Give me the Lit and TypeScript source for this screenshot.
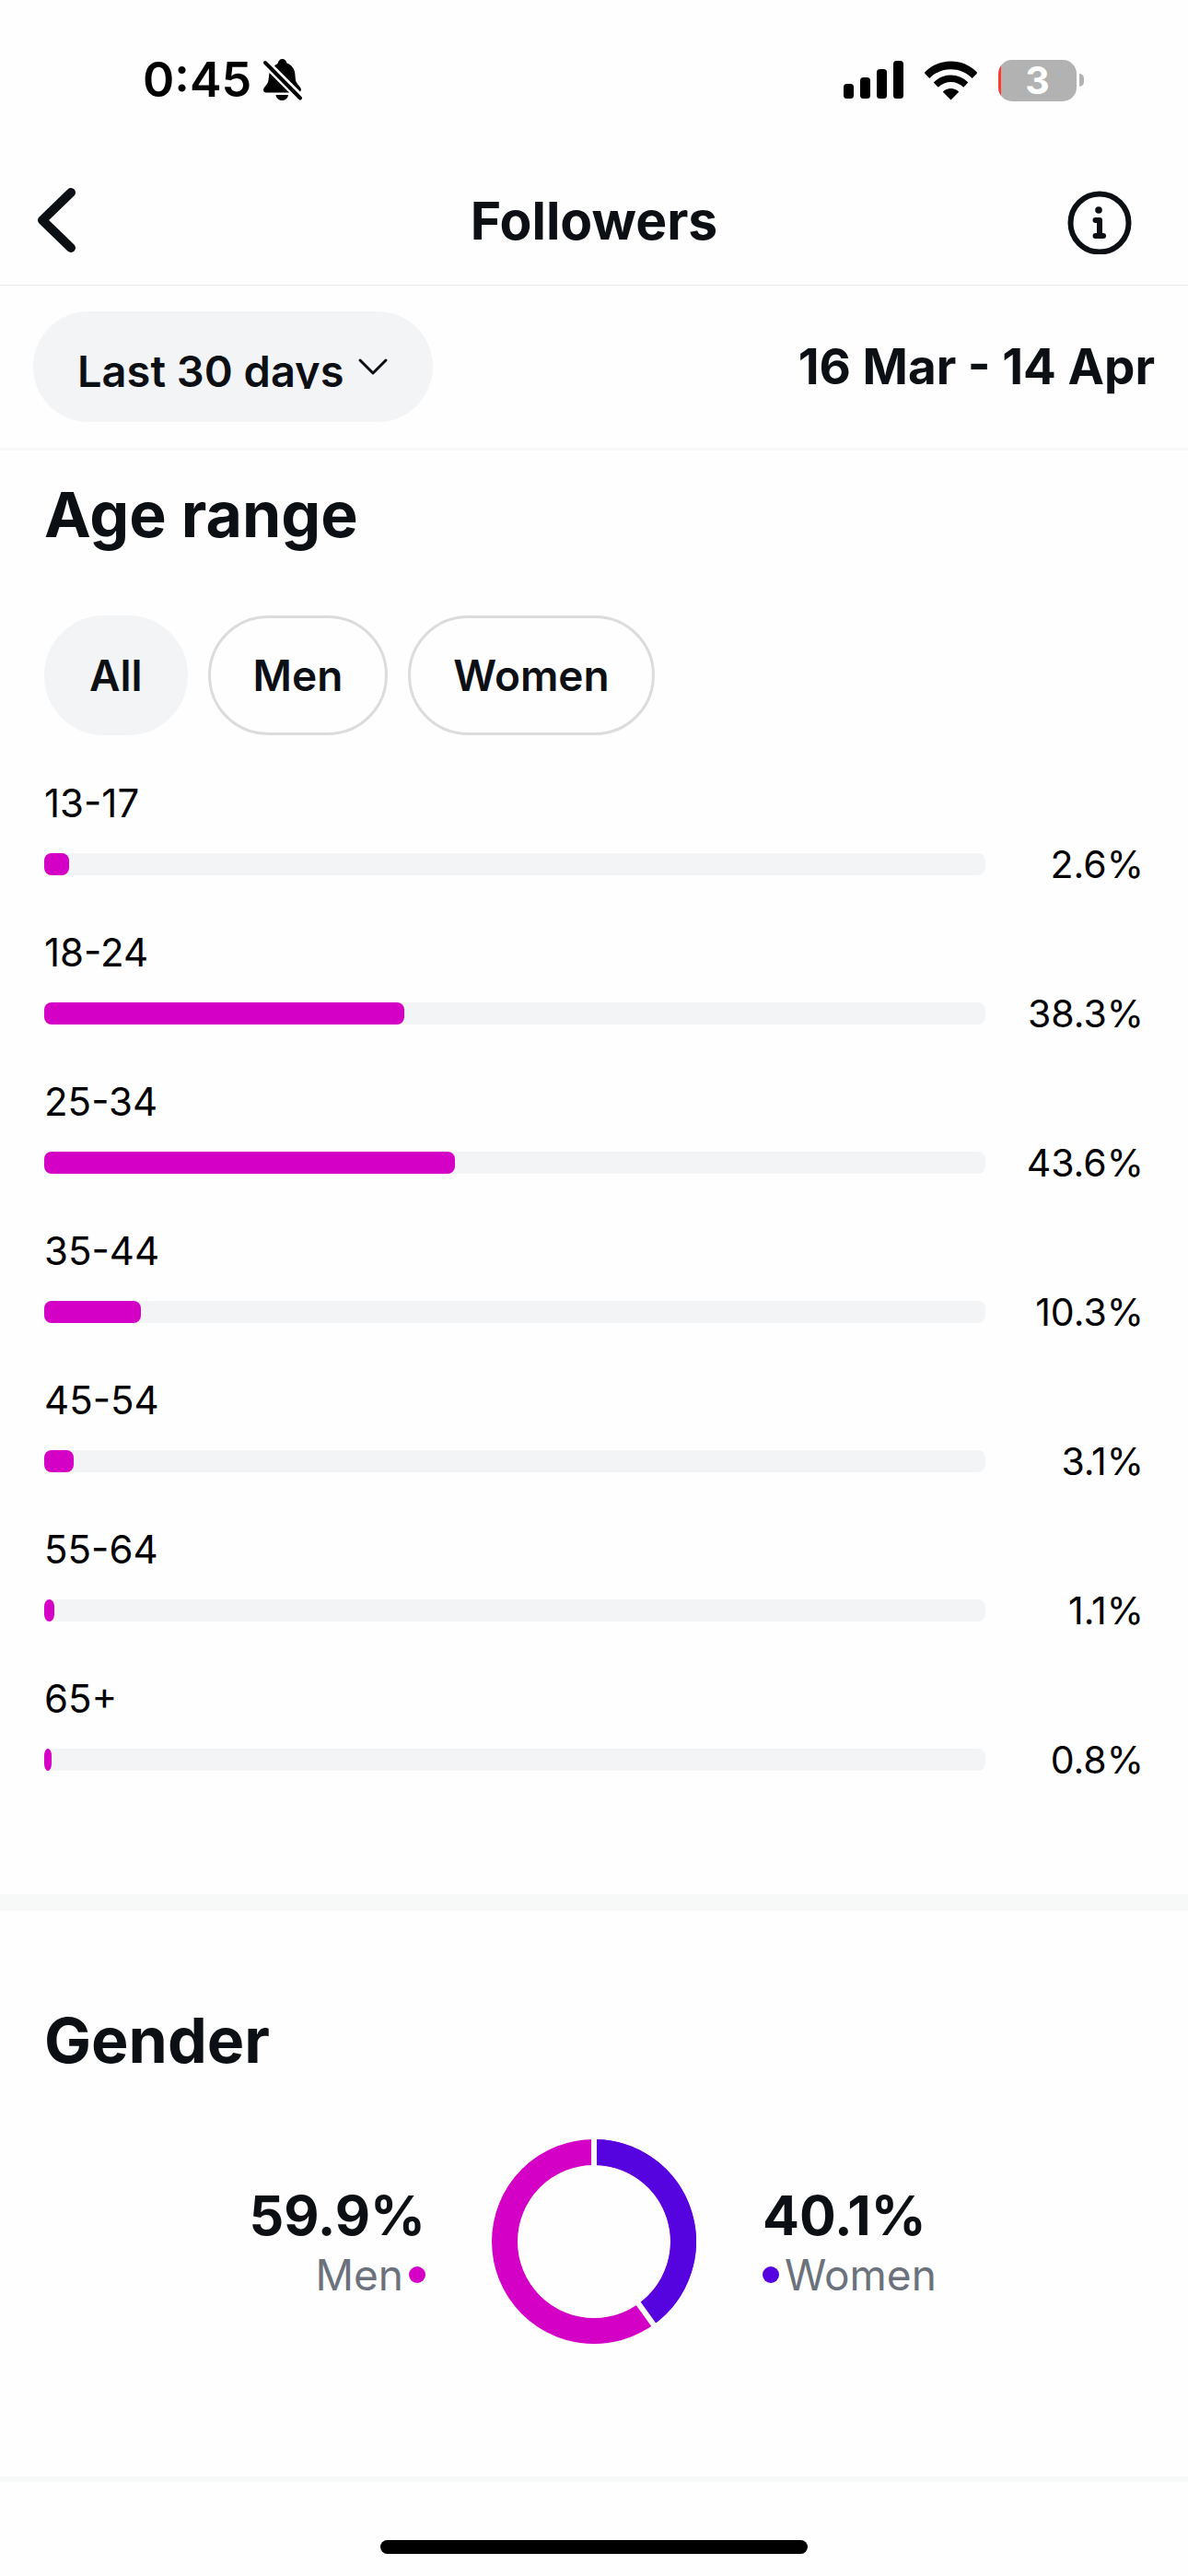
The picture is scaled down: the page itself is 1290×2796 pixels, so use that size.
import { LitElement, html, css, svg } from "lit";
import { customElement, property, state } from "lit/decorators.js";
import { classMap } from "lit/directives/class-map.js";

const FONT = css`Inter, "Liberation Sans", sans-serif`;

const AGE_ROWS = [
  { label: "13-17", value: 2.6 },
  { label: "18-24", value: 38.3 },
  { label: "25-34", value: 43.6 },
  { label: "35-44", value: 10.3 },
  { label: "45-54", value: 3.1 },
  { label: "55-64", value: 1.1 },
  { label: "65+", value: 0.8 },
];

@customElement("status-bar")
export class StatusBar extends LitElement {
  static styles = css`
    :host {
      display: flex;
      justify-content: space-between;
      align-items: center;
      height: 174px;
      padding: 0 113px 0 155px;
      box-sizing: border-box;
      color: #000;
      font-family: ${FONT};
    }
    .clock,
    .signals {
      display: flex;
      align-items: center;
    }
    .clock {
      gap: 12px;
    }
    .time {
      font-size: 52px;
      line-height: 64px;
      font-weight: 600;
    }
    .signals {
      gap: 22px;
    }
    .battery {
      display: flex;
      align-items: center;
      gap: 3px;
    }
    .cell {
      display: grid;
      place-items: center;
      width: 85px;
      height: 45px;
      border-radius: 15px;
      background: linear-gradient(90deg, #ff3b30 3px, #b2b2b2 3px);
      color: #fff;
      font-size: 41px;
      line-height: 45px;
      font-weight: 700;
    }
    .cap {
      width: 5px;
      height: 14px;
      border-radius: 0 5px 5px 0;
      background: #b2b2b2;
    }
    svg {
      display: block;
    }
  `;
  render() {
    return html`
      <div class="clock">
        <span class="time">0:45</span>
        <svg width="44" height="48" viewBox="0 0 44 48" role="img" aria-label="Silent mode">
          <path d="M13 8.500C14.500 7 15.500 6.500 16.500 6C17 3 19 1 21.500 1C24 1 26 3 26.500 5.500C32 7.500 35 12 35.300 17L36 24C36.500 28 42 31 42 34.500L41 36.500Z" />
          <path d="M7.500 16L29 37.500H4C2 37.500 1 36.500 1 34.500C1 31.500 6 29 6.500 24Z" />
          <path d="M14.500 40H28C27.500 43.500 25 46 21.300 46S15 43.500 14.500 40Z" />
          <path d="M3 5L41 43.500" fill="none" stroke="#000" stroke-width="4" stroke-linecap="round" />
        </svg>
      </div>
      <div class="signals">
        <svg width="66" height="42" viewBox="0 0 66 42" role="img" aria-label="Mobile signal">
          <rect x="0" y="25" width="11" height="16" rx="3.500" />
          <rect x="18" y="18" width="11" height="23" rx="3.500" />
          <rect x="36" y="9" width="11" height="32" rx="3.500" />
          <rect x="54" y="0" width="11" height="41" rx="3.500" />
        </svg>
        <svg width="58" height="43" viewBox="0 0 58 43" role="img" aria-label="Wi-Fi">
          <path d="M28.500 42.500L19.800 33.700C24.500 28.900 32.500 28.900 37.200 33.700Z" />
          <path d="M14.800 28.700L9.700 23.600C20 12.800 37 12.800 47.300 23.600L42.200 28.700C34.500 21 22.500 21 14.800 28.700Z" />
          <path d="M5.300 18.900L.6 14.200C-.1 13.500-.1 12.700.6 12C16-3.300 41-3.300 56.400 12C57.100 12.700 57.100 13.500 56.400 14.200L51.700 18.900C39 6 18 6 5.300 18.900Z" />
        </svg>
        <div class="battery" role="img" aria-label="Battery 3 percent">
          <span class="cell">3</span><span class="cap"></span>
        </div>
      </div>
    `;
  }
}

@customElement("age-row")
export class AgeRow extends LitElement {
  @property() label = "";
  @property({ type: Number }) value = 0;
  static styles = css`
    :host {
      display: block;
      color: #000;
      font-family: ${FONT};
      font-size: 42px;
      line-height: 54px;
    }
    .line {
      display: grid;
      grid-template-columns: 1fr 172px;
      align-items: center;
      height: 54px;
      margin-top: 12px;
    }
    .track {
      height: 24px;
      border-radius: 8px;
      background: #f3f4f6;
    }
    .fill {
      height: 24px;
      border-radius: min(8px, 50%) / 8px;
      background: #d400c5;
    }
    .value {
      font-size: 41px;
      text-align: right;
    }
  `;
  render() {
    return html`
      <div class="label">${this.label}</div>
      <div class="line">
        <div class="track"><div class="fill" style="width:${this.value}%"></div></div>
        <span class="value">${this.value}%</span>
      </div>
    `;
  }
}

@customElement("gender-ring")
export class GenderRing extends LitElement {
  @property({ type: Number }) women = 0;
  static styles = css`
    :host,
    svg {
      display: block;
    }
  `;
  render() {
    const angle = (this.women / 100) * 2 * Math.PI;
    const at = (a: number, r: number) => `${111 + r * Math.sin(a)} ${111 - r * Math.cos(a)}`;
    const cut = (a: number) =>
      svg`<path d="M${at(a, 78)}L${at(a, 116)}" stroke="#fefefe" stroke-width="6" />`;
    return html`
      <svg width="222" height="222" viewBox="0 0 222 222" role="img" aria-label="Gender split">
        <circle cx="111" cy="111" r="97" fill="none" stroke="#d400c5" stroke-width="28" />
        <path d="M${at(0, 97)}A97 97 0 0 1 ${at(angle, 97)}" fill="none" stroke="#5604df" stroke-width="28" />
        ${cut(0)}${cut(angle)}
      </svg>
    `;
  }
}

@customElement("app-root")
export class AppRoot extends LitElement {
  @state() private segment = "All";

  static styles = css`
    :host {
      display: flex;
      flex-direction: column;
      min-height: 100vh;
      background: #fefefe;
      color: #0c0f14;
      font-family: ${FONT};
    }
    button {
      margin: 0;
      padding: 0;
      border: 0;
      background: none;
      color: inherit;
      font: inherit;
      cursor: pointer;
    }
    svg {
      display: block;
    }
    h1,
    h2 {
      margin: 0;
    }
    .nav {
      display: grid;
      grid-template-columns: 1fr auto 1fr;
      align-items: center;
      height: 136px;
      padding: 0 40px 4px;
      box-sizing: border-box;
      border-bottom: 1px solid #e6e6e6;
    }
    .title {
      font-size: 57px;
      line-height: 72px;
      font-weight: 700;
    }
    .back {
      justify-self: start;
    }
    .info {
      justify-self: end;
      padding-right: 20px;
    }
    .filters {
      display: flex;
      justify-content: space-between;
      align-items: center;
      height: 179px;
      padding: 0 36px;
      box-sizing: border-box;
      border-bottom: 3px solid #f7f9f9;
    }
    .period {
      display: flex;
      align-items: center;
      gap: 14px;
      height: 120px;
      padding: 0 48px;
      border-radius: 60px;
      background: #f3f4f6;
      font-size: 47px;
      font-weight: 600;
    }
    .period-text {
      height: 48px;
      line-height: 58px;
      overflow: hidden;
    }
    .dates {
      font-size: 53px;
      line-height: 64px;
      font-weight: 700;
    }
    .age {
      padding: 25px 48px 119px;
      border-bottom: 18px solid #f7f9f9;
    }
    .heading {
      font-size: 68px;
      line-height: 88px;
      font-weight: 700;
    }
    .segments {
      display: flex;
      gap: 22px;
      margin: 66px 0 47px;
    }
    .segment {
      height: 130px;
      padding: 0 46px;
      border: 3px solid #dcdcdc;
      border-radius: 65px;
      font-size: 46px;
      font-weight: 600;
    }
    .selected {
      border-color: #f3f4f6;
      background: #f3f4f6;
    }
    .rows {
      display: flex;
      flex-direction: column;
      gap: 42px;
    }
    .gender {
      flex: 1;
      padding: 96px 48px 0;
    }
    .split {
      display: grid;
      grid-template-columns: 1fr auto 1fr;
      align-items: center;
      gap: 72px;
      margin-top: 64px;
    }
    .share {
      display: flex;
      flex-direction: column;
    }
    .men {
      align-items: flex-end;
    }
    .figure {
      font-size: 59px;
      line-height: 72px;
      font-weight: 700;
    }
    .legend {
      display: flex;
      align-items: center;
      gap: 6px;
      color: #6b727c;
      font-size: 46px;
      line-height: 56px;
    }
    .dot {
      width: 18px;
      height: 18px;
      border-radius: 50%;
      background: #5604df;
    }
    .men .dot {
      background: #d400c5;
    }
    .foot {
      display: flex;
      justify-content: center;
      padding: 63px 0 24px;
      border-top: 6px solid #f7f9f9;
    }
    .home {
      width: 36%;
      height: 15px;
      border-radius: 8px;
      background: #000;
    }
  `;

  render() {
    return html`
      <status-bar></status-bar>
      <header class="nav">
        <button class="back" aria-label="Back">
          <svg width="44" height="72" viewBox="0 0 44 72" fill="none" stroke="#0c0f14" stroke-width="10" stroke-linecap="round" stroke-linejoin="round">
            <path d="M37 5L6 35L37 65" />
          </svg>
        </button>
        <h1 class="title">Followers</h1>
        <button class="info" aria-label="Information">
          <svg width="72" height="72" viewBox="0 0 72 72" fill="none" stroke="#0c0f14" stroke-width="6" stroke-linecap="round" stroke-linejoin="round">
            <circle cx="36" cy="38" r="31.500" />
            <circle cx="35" cy="24" r="3.800" fill="#0c0f14" stroke="none" />
            <path d="M31.500 35H36V52M31.500 52H40" />
          </svg>
        </button>
      </header>
      <div class="filters">
        <button class="period">
          <span class="period-text">Last 30 days</span>
          <svg width="34" height="20" viewBox="0 0 34 20" fill="none" stroke="#0c0f14" stroke-width="3" stroke-linecap="round" stroke-linejoin="round">
            <path d="M3 3L17 17L31 3" />
          </svg>
        </button>
        <span class="dates">16 Mar - 14 Apr</span>
      </div>
      <section class="age">
        <h2 class="heading">Age range</h2>
        <div class="segments">
          ${["All", "Men", "Women"].map(
            (name) => html`<button
              class=${classMap({ segment: true, selected: this.segment === name })}
              aria-pressed=${this.segment === name}
              @click=${() => (this.segment = name)}
            >${name}</button>`
          )}
        </div>
        <div class="rows">
          ${AGE_ROWS.map((r) => html`<age-row .label=${r.label} .value=${r.value}></age-row>`)}
        </div>
      </section>
      <section class="gender">
        <h2 class="heading">Gender</h2>
        <div class="split">
          <div class="share men">
            <span class="figure">59.9%</span>
            <span class="legend">Men<i class="dot"></i></span>
          </div>
          <gender-ring .women=${40.1}></gender-ring>
          <div class="share">
            <span class="figure">40.1%</span>
            <span class="legend"><i class="dot"></i>Women</span>
          </div>
        </div>
      </section>
      <footer class="foot"><div class="home"></div></footer>
    `;
  }
}
